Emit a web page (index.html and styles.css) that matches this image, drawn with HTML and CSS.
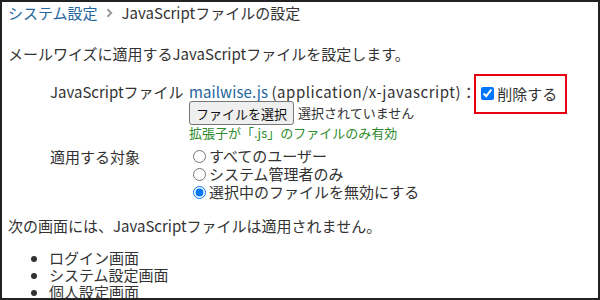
FILE: index.html
```html
<!DOCTYPE html>
<html lang="ja">
<head>
<meta charset="utf-8">
<link rel="stylesheet" href="styles.css">
</head>
<body>
<div class="frame">
  <div class="crumbs">
    <a class="link" href="#">システム設定</a>
    <svg class="chev" width="7" height="10" viewBox="0 0 7 10"><path d="M1.5 1.2 L5.2 5 L1.5 8.8" fill="none" stroke="#9a9a9a" stroke-width="2"/></svg>
    <span>JavaScriptファイルの設定</span>
  </div>
  <p class="desc">メールワイズに適用するJavaScriptファイルを設定します。</p>
  <div class="settings">
    <div class="label">JavaScriptファイル</div>
    <div class="value">
      <div class="fileline"><a class="link fname" href="#">mailwise.js</a> <span class="mime">(application/x-javascript)</span>：<span class="delbox"><input type="checkbox" checked class="chk"><span>削除する</span></span></div>
      <div class="picker"><button class="btn" type="button">ファイルを選択</button><span class="none">選択されていません</span></div>
      <div class="hint">拡張子が「.js」のファイルのみ有効</div>
    </div>
    <div class="label">適用する対象</div>
    <div class="value radios">
      <label class="opt"><input type="radio" name="t">すべてのユーザー</label>
      <label class="opt"><input type="radio" name="t">システム管理者のみ</label>
      <label class="opt"><input type="radio" name="t" checked>選択中のファイルを無効にする</label>
    </div>
  </div>
  <p class="note">次の画面には、JavaScriptファイルは適用されません。</p>
  <ul class="screens">
    <li>ログイン画面</li>
    <li>システム設定画面</li>
    <li>個人設定画面</li>
  </ul>
</div>
</body>
</html>
```
FILE: styles.css
```css
html, body {
  margin: 0;
  padding: 0;
  background: #fff;
}
.frame {
  box-sizing: border-box;
  width: 600px;
  height: 300px;
  border: 2px solid #222;
  padding: 1px 6px 0;
  overflow: hidden;
  font-family: "Noto Sans CJK JP", "Noto Sans", sans-serif;
  font-size: 15px;
  line-height: 20px;
  color: #333;
}
.link {
  color: #23659c;
  text-decoration: none;
}
.crumbs {
  display: flex;
  align-items: center;
  gap: 7px;
}
.chev {
  margin: 0 2px 0 1px;
}
.desc {
  margin: 21px 0 0;
}
.settings {
  display: grid;
  grid-template-columns: 139px auto;
  margin: 18px 0 0 42px;
  row-gap: 6px;
}
.fileline {
  height: 20px;
  white-space: nowrap;
}
.fname {
  letter-spacing: 0.1px;
}
.mime {
  letter-spacing: 0.55px;
}
.delbox {
  display: inline-flex;
  align-items: center;
  border: 2px solid #e60012;
  padding: 8px 8px 8px 5px;
  margin: -10px 0 -10px -2px;
  vertical-align: middle;
}
.chk {
  margin: 0 3px 0 0;
  width: 13px;
  height: 13px;
}
.picker {
  display: flex;
  align-items: center;
  height: 24px;
  margin-top: -1px;
}
.btn {
  font-family: inherit;
  font-size: 13px;
  color: #111;
  height: 24px;
  padding: 0 6px;
  background: #efefef;
  border: 1px solid #767676;
  border-radius: 3px;
  margin-right: 4px;
}
.none {
  font-size: 13px;
  color: #333;
}
.hint {
  font-size: 13px;
  line-height: 16px;
  color: #2e8b2e;
}
.radios {
  display: flex;
  flex-direction: column;
}
.label {
  line-height: 20px;
}
.opt {
  display: flex;
  align-items: center;
  height: 18px;
}
.opt input {
  margin: 0 3px 0 4px;
  width: 13px;
  height: 13px;
}
.note {
  margin: 15px 0 0;
}
.screens {
  margin: 13px 0 0;
  padding-left: 41px;
  line-height: 17px;
}
.screens li {
  height: 17px;
}
```
